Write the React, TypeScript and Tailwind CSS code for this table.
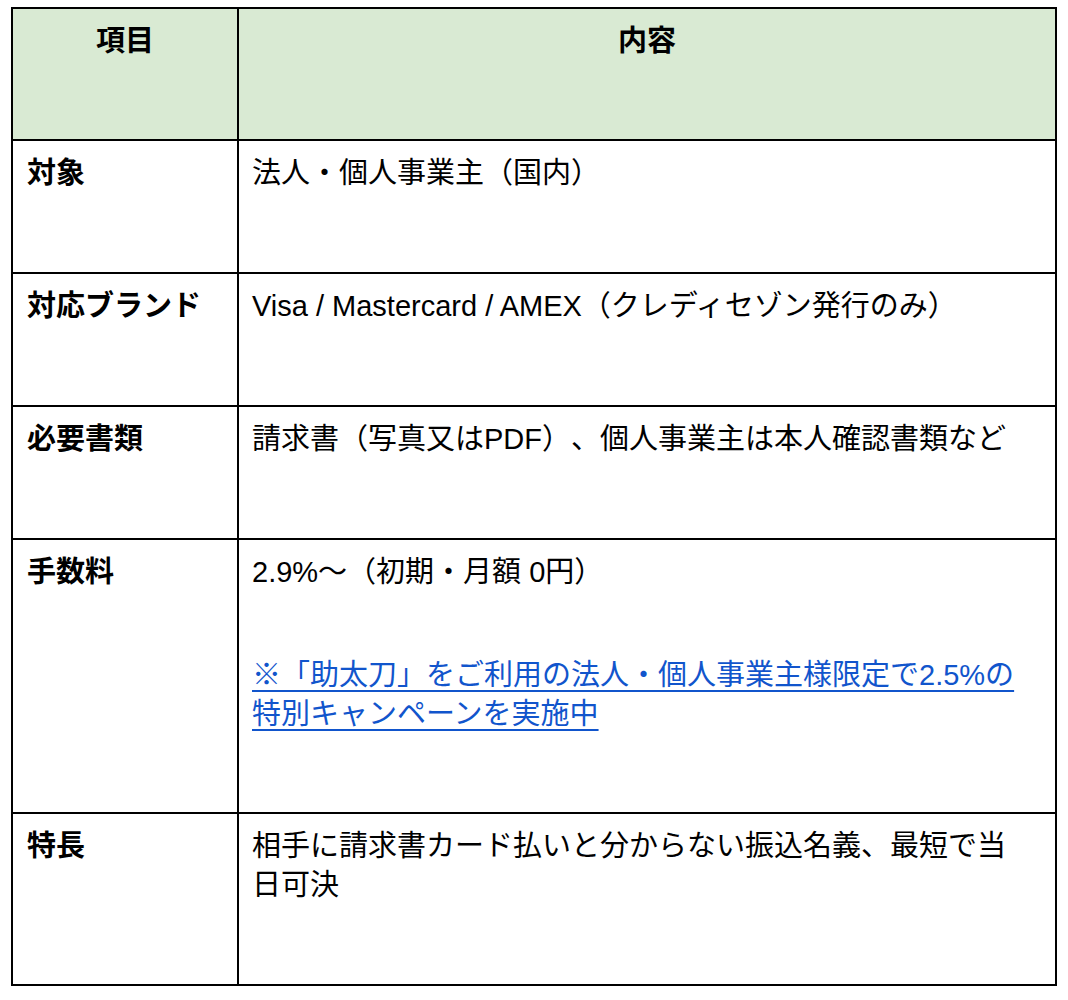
import type React from "react";

type Row = {
  label: string;
  height: string;
  content: React.ReactNode;
};

const rows: Row[] = [
  { label: "対象", height: "h-[133px]", content: "法人・個人事業主（国内）" },
  {
    label: "対応ブランド",
    height: "h-[133px]",
    content: "Visa / Mastercard / AMEX（クレディセゾン発行のみ）",
  },
  {
    label: "必要書類",
    height: "h-[133px]",
    content: "請求書（写真又はPDF）、個人事業主は本人確認書類など",
  },
  {
    label: "手数料",
    height: "h-[274px]",
    content: (
      <>
        <p>2.9%〜（初期・月額 0円）</p>
        <p className="mt-[64px]">
          <a href="#" className="text-[#1155cc] underline decoration-[2px] underline-offset-[5px]">
            ※「助太刀」をご利用の法人・個人事業主様限定で2.5%の
            <br />
            特別キャンペーンを実施中
          </a>
        </p>
      </>
    ),
  },
  {
    label: "特長",
    height: "h-[172px]",
    content: (
      <>
        相手に請求書カード払いと分からない振込名義、最短で当
        <br />
        日可決
      </>
    ),
  },
];

export default function App() {
  return (
    <div className="min-h-[1000px] bg-white pl-[11px] pt-[7px] font-['Liberation_Sans','Noto_Sans_CJK_JP',sans-serif] text-[29px] leading-[39px] text-black [text-spacing-trim:space-all]">
      <table className="w-[1046px] table-fixed border-collapse">
        <colgroup>
          <col className="w-[226px]" />
          <col />
        </colgroup>
        <thead>
          <tr className="h-[132px] bg-[#d9ead3]">
            <th className="border-2 border-black px-[14px] pt-[13px] text-center align-top font-bold">項目</th>
            <th className="border-2 border-black px-[14px] pt-[13px] text-center align-top font-bold">内容</th>
          </tr>
        </thead>
        <tbody>
          {rows.map((row) => (
            <tr key={row.label} className={row.height}>
              <td className="border-2 border-black px-[14px] pt-[13px] align-top font-bold">{row.label}</td>
              <td className="border-2 border-black pl-[13px] pr-[10px] pt-[13px] align-top">{row.content}</td>
            </tr>
          ))}
        </tbody>
      </table>
    </div>
  );
}
